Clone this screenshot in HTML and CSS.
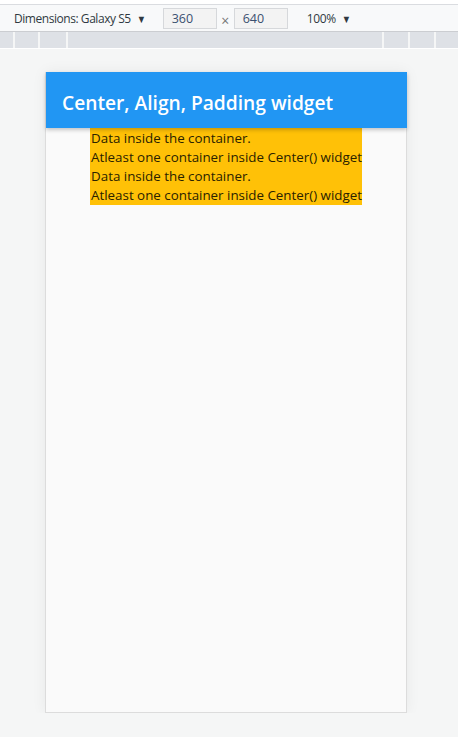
FILE: index.html
```html
<!DOCTYPE html>
<html>
<head>
<meta charset="utf-8">
<link rel="stylesheet" href="styles.css">
</head>
<body>
<div class="topline"></div>
<div class="toolbar">
  <span class="dim">Dimensions: Galaxy S5</span><span class="caret">▼</span>
  <span class="field">360</span>
  <span class="times">×</span>
  <span class="field">640</span>
  <span class="zoom">100%</span><span class="caret">▼</span>
</div>
<div class="ruler">
  <div class="seg s1"></div>
  <div class="seg s2"></div>
  <div class="seg s3"></div>
  <div class="seg grow"></div>
  <div class="seg s4"></div>
  <div class="seg s5"></div>
  <div class="seg s6"></div>
</div>
<div class="stage">
  <div class="device">
    <div class="appbar">Center, Align, Padding widget</div>
    <div class="content">
      <div class="box">
        <div>Data inside the container.</div>
        <div>Atleast one container inside Center() widget</div>
        <div>Data inside the container.</div>
        <div>Atleast one container inside Center() widget</div>
      </div>
    </div>
  </div>
</div>
</body>
</html>
```

FILE: styles.css
```css
html, body {
  margin: 0;
  padding: 0;
  background: #f5f6f6;
  font-family: "Open Sans", "Noto Sans", sans-serif;
  overflow: hidden;
}
.topline {
  height: 4px;
  background: #ffffff;
  border-bottom: 1px solid #dadce0;
}
.toolbar {
  height: 27px;
  background: #f8f9fa;
  border-bottom: 1px solid #cbcdd1;
  display: flex;
  align-items: center;
  font-size: 12px;
  color: #303942;
  padding-left: 14px;
  box-sizing: border-box;
}
.dim { letter-spacing: -0.45px; }
.caret { font-size: 11px; margin-left: 5px; transform: scaleX(0.85); }
.field {
  width: 54px;
  height: 21px;
  box-sizing: border-box;
  border: 1px solid #d6d8db;
  background: #f3f3f3;
  color: #3b5070;
  padding-left: 8px;
  line-height: 19px;
  font-size: 12.5px;
}
.dim + .caret + .field { margin-left: 16px; }
.times { width: 17px; text-align: center; color: #777; font-size: 14px; padding-top: 4px; }
.zoom { margin-left: 19px; letter-spacing: -0.3px; }
.ruler {
  height: 16px;
  background: #dee1e6;
  display: flex;
  border-bottom: 1px solid #ffffff;
}
.seg { height: 100%; border-right: 2px solid #f5f6f6; box-sizing: border-box; }
.s1 { width: 15px; }
.s2 { width: 25px; }
.s3 { width: 28px; }
.grow { flex: 1; }
.s4 { width: 26px; }
.s5 { width: 26px; }
.s6 { width: 22px; border-right: 0; }
.stage {
  padding-top: 23px;
  padding-left: 45px;
}
.device {
  width: 362px;
  height: 641px;
  box-sizing: border-box;
  border: 1px solid #dcdcdc;
  border-top: 0;
  background: #fafafa;
  box-shadow: 0 0 14px rgba(0,0,0,0.06);
}
.appbar {
  height: 56px;
  margin: 0 -1px 0 0;
  background: #2196f3;
  color: #ffffff;
  font-size: 19.2px;
  font-weight: 600;
  display: flex;
  align-items: center;
  padding-left: 16px;
  padding-top: 4px;
  box-sizing: border-box;
  box-shadow: 0 2px 4px rgba(0,0,0,0.22);
  position: relative;
}
.content {
  display: flex;
  justify-content: center;
  padding-top: 1px;
}
.box {
  background: #ffc107;
  color: #2a2200;
  font-size: 13.35px;
  line-height: 19px;
  padding: 0 0 0 1px;
  margin-top: -1px;
  padding-top: 1px;
}
```
